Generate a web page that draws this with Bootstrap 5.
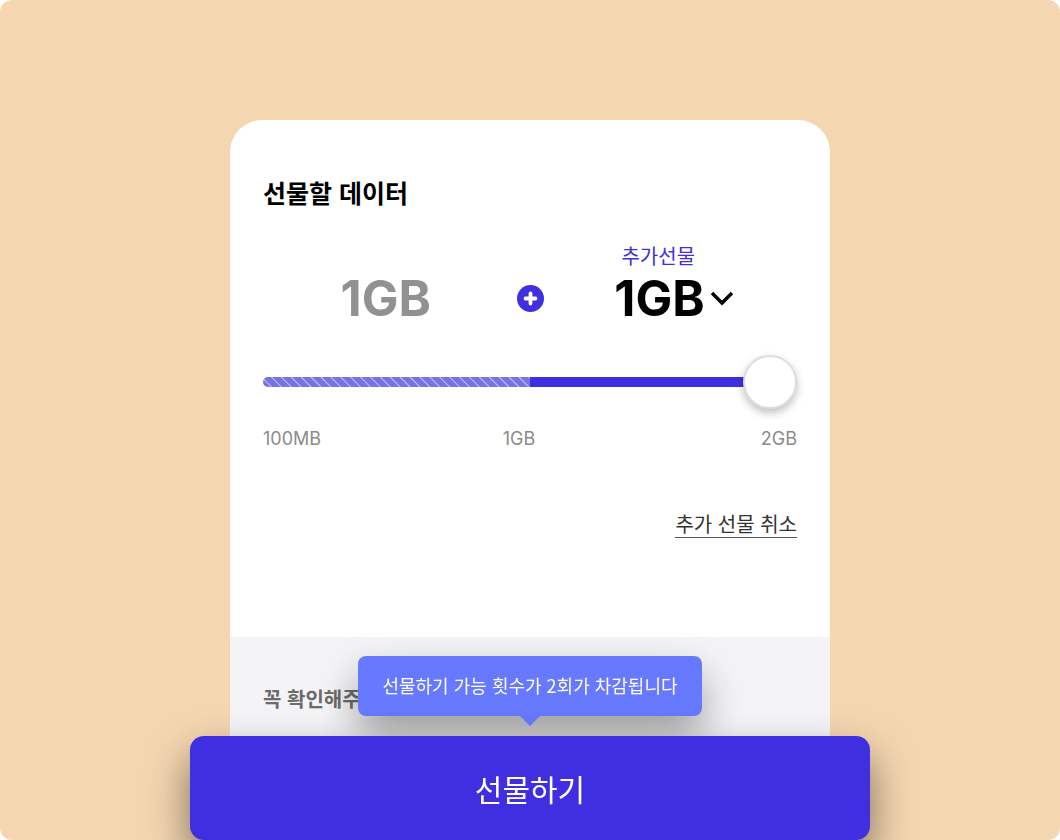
<!DOCTYPE html>
<html lang="ko">
<head>
<meta charset="utf-8">
<meta name="viewport" content="width=device-width, initial-scale=1">
<title>데이터 선물하기</title>
<link href="https://cdn.jsdelivr.net/npm/bootstrap@5.3.0/dist/css/bootstrap.min.css" rel="stylesheet">
<style>
  :root { --brand: #402fe0; --sand: #f4d6b0; --bubble: #6679ff; }
  body { font-family: "Noto Sans CJK KR", sans-serif; background: #fff; color: #000; }
  .stage { background: var(--sand); border-radius: 12px; padding-top: 120px; }
  .sheet { max-width: 600px; border-radius: 32px 32px 0 0; }
  .sheet-body { padding: 52px 33px 99px; }
  .sheet-title { font-size: 25px; line-height: 40px; font-weight: 700; }
  .amounts { display: grid; grid-template-columns: 1fr auto 1fr; margin-top: 30px; }
  .amount-text { font-family: "Inter", sans-serif; font-size: 49px; line-height: 58px; font-weight: 700; }
  .amount-base { color: #919191; }
  .extra-label { font-size: 20px; line-height: 28px; font-weight: 400; color: var(--brand); padding-right: 32px; }
  .extra-select {
    width: 120px; height: 58px; padding: 0; border: 0; border-radius: 4px; color: #000;
    background-color: transparent; background-position: right center; background-size: 24px 16px;
    background-image: url("data:image/svg+xml,%3Csvg xmlns='http://www.w3.org/2000/svg' viewBox='0 0 24 16'%3E%3Cpath d='M2 2l10 10L22 2' fill='none' stroke='%23000' stroke-width='3.4'/%3E%3C/svg%3E");
  }
  .plus-icon { margin-bottom: 16px; }
  .data-range { height: 56px; margin-top: 26px; }
  .data-range::-webkit-slider-runnable-track {
    height: 10px; border-radius: 5px;
    background:
      linear-gradient(90deg, transparent 50%, var(--brand) 50%),
      repeating-linear-gradient(45deg, #7673e2 0 5px, #c5c3f5 6px, #7673e2 7px);
  }
  .data-range::-webkit-slider-thumb {
    width: 54px; height: 54px; margin-top: -22px; background: #fff; border-radius: 50%;
    border: 2px solid #dedede; box-shadow: 0 4px 8px rgba(0, 0, 0, .25);
  }
  .data-range::-webkit-slider-thumb:active { background: #fff; }
  .scale { display: grid; grid-template-columns: 51% 1fr; font-family: "Inter", sans-serif; font-size: 18px; line-height: 24px; color: #8b8b8b; margin-top: 17px; }
  .cancel-link { font-size: 20px; line-height: 26px; color: #333; border-bottom: 1px solid #555; margin-top: 60px; }
  .notice { background: #f4f4f6; padding: 46px 33px; }
  .notice-title { font-size: 20px; line-height: 32px; font-weight: 700; color: #6b6b6b; }
  .dock { max-width: 680px; }
  .bubble {
    background: var(--bubble); border-radius: 8px; padding: 14px 24px 16px; margin-bottom: 20px;
    font-size: 18px; line-height: 30px; font-weight: 400; box-shadow: 0 20px 40px rgba(0, 0, 0, .36);
  }
  .bubble::after {
    content: ""; position: absolute; top: 100%; left: 50%; transform: translateX(-50%);
    border: 10px solid transparent; border-top-color: var(--bubble); border-bottom: 0;
  }
  .send-btn {
    --bs-btn-bg: var(--brand); --bs-btn-color: #fff; --bs-btn-border-width: 0;
    --bs-btn-hover-bg: #3727ca; --bs-btn-hover-color: #fff;
    --bs-btn-border-radius: 14px; --bs-btn-font-size: 30px; --bs-btn-font-weight: 400; --bs-btn-line-height: 44px;
    padding: 30px; box-shadow: 0 20px 40px rgba(0, 0, 0, .5);
  }
</style>
</head>
<body>
<div class="stage min-vh-100 d-flex flex-column overflow-hidden">
  <main class="sheet w-100 mx-auto bg-white overflow-hidden flex-grow-1 d-flex flex-column">
    <section class="sheet-body d-flex flex-column">
      <h1 class="sheet-title mb-0">선물할 데이터</h1>
      <div class="amounts gap-2 align-items-end">
        <div class="amount-text amount-base text-center">1GB</div>
        <svg class="plus-icon" width="27" height="27" viewBox="0 0 27 27" role="img" aria-label="더하기">
          <circle cx="13.5" cy="13.5" r="13.5" fill="#402fe0"/>
          <path d="M13.5 8.5v10M8.5 13.5h10" stroke="#fff" stroke-width="3.8" stroke-linecap="round"/>
        </svg>
        <div class="d-flex flex-column align-items-center">
          <label class="extra-label" for="extra">추가선물</label>
          <select class="form-select extra-select amount-text" id="extra">
            <option>1GB</option>
          </select>
        </div>
      </div>
      <input class="form-range data-range" type="range" min="100" max="2000" value="2000" aria-label="선물할 데이터">
      <div class="scale">
        <div class="d-flex justify-content-between"><span>100MB</span><span>1GB</span></div>
        <span class="text-end">2GB</span>
      </div>
      <a class="cancel-link align-self-end text-decoration-none" href="#">추가 선물 취소</a>
    </section>
    <section class="notice flex-grow-1">
      <h2 class="notice-title mb-0">꼭 확인해주</h2>
    </section>
  </main>
</div>
<div class="dock fixed-bottom mx-auto d-flex flex-column align-items-center">
  <div class="bubble position-relative text-white text-nowrap" role="status">선물하기 가능 횟수가 2회가 차감됩니다</div>
  <button class="btn send-btn w-100 position-relative" type="button">선물하기</button>
</div>
</body>
</html>
